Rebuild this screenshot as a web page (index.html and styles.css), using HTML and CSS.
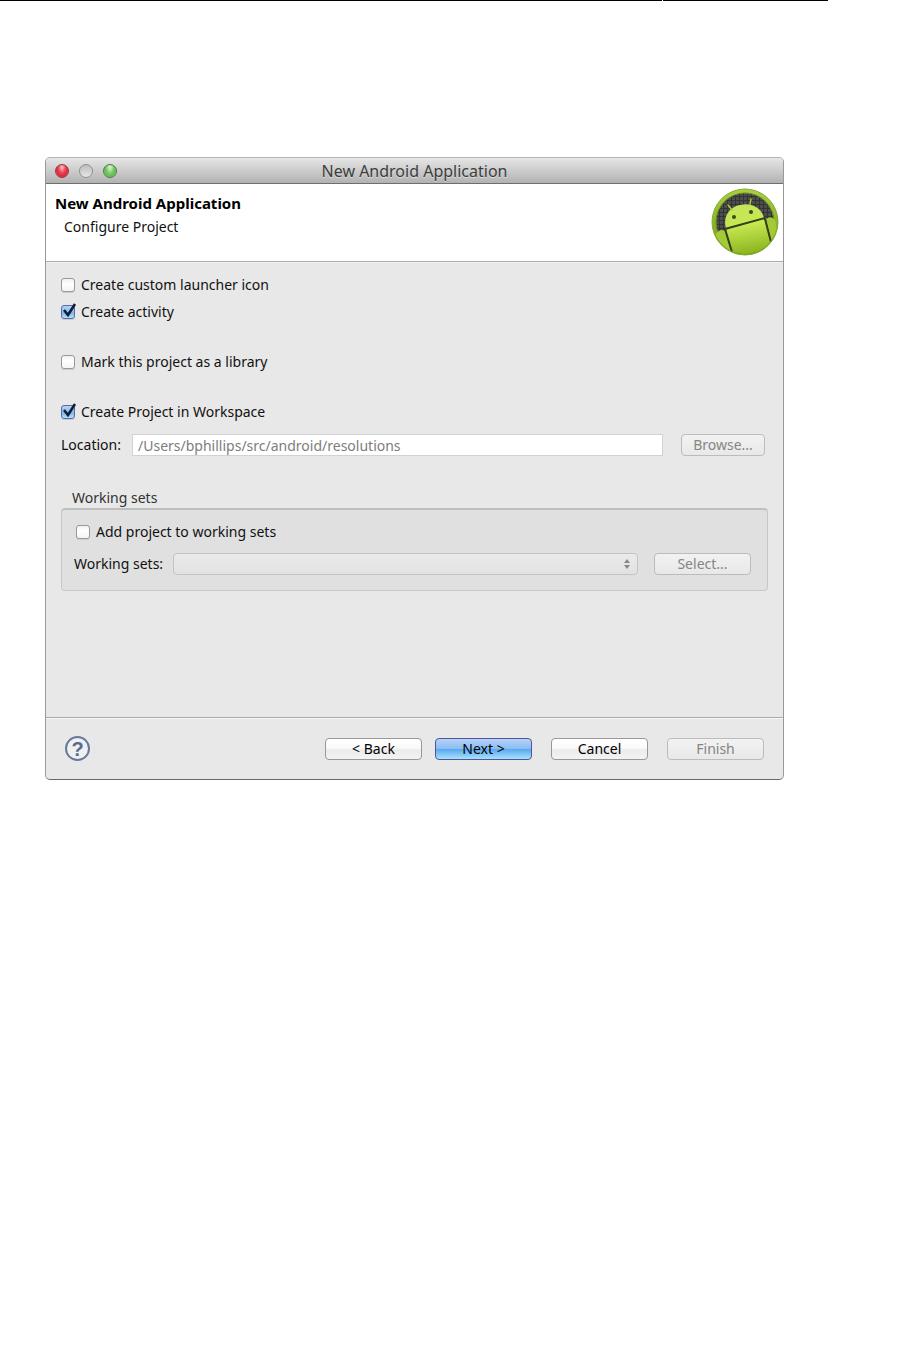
FILE: index.html
```html
<!DOCTYPE html>
<html lang="en">
<head>
    <meta charset="UTF-8">
    <meta name="viewport" content="width=device-width, initial-scale=1.0">
    <title>New Android Application</title>
    <link rel="stylesheet" href="styles.css">
</head>
<body>
    <!-- Page rule -->
    <div class="page-rule">
        <span class="rule-long"></span>
        <span class="rule-short"></span>
    </div>

    <!-- Dialog window -->
    <form class="window">
        <div class="titlebar">
            <div class="lights">
                <span class="light red"></span>
                <span class="light gray"></span>
                <span class="light green"></span>
            </div>
            <div class="window-title">New Android Application</div>
        </div>

        <div class="banner">
            <div class="banner-text">
                <h1>New Android Application</h1>
                <p>Configure Project</p>
            </div>
            <svg class="logo" width="68" height="68" viewBox="0 0 68 68" aria-hidden="true">
                <defs>
                    <linearGradient id="ring" x1="0" y1="0" x2="0" y2="1">
                        <stop offset="0" stop-color="#a9cf45"/>
                        <stop offset="1" stop-color="#6f9a12"/>
                    </linearGradient>
                    <linearGradient id="droid" gradientUnits="userSpaceOnUse" x1="30" y1="16" x2="38" y2="68">
                        <stop offset="0" stop-color="#c4e65a"/>
                        <stop offset="0.4" stop-color="#c6e852"/>
                        <stop offset="1" stop-color="#86b01a"/>
                    </linearGradient>
                    <pattern id="mesh" width="4" height="4" patternUnits="userSpaceOnUse">
                        <rect width="4" height="4" fill="#4c4d4d"/>
                        <path d="M0 0H4M0 0V4" stroke="#333" stroke-width="2"/>
                    </pattern>
                    <clipPath id="disc"><circle cx="34" cy="34" r="32"/></clipPath>
                </defs>
                <circle cx="34" cy="34" r="33" fill="url(#ring)" stroke="#86ab2c" stroke-width="1"/>
                <circle cx="34" cy="34" r="29" fill="url(#mesh)" stroke="#688f1a" stroke-width="1"/>
                <g clip-path="url(#disc)">
                    <path d="M15 41L53 30L63 60L40 70H22z" fill="url(#droid)"/>
                    <path d="M5 46Q9 40 14 43L21 66L4 58z" fill="#a4ca36"/>
                    <path d="M55 31Q60 27 64 32L68 50L60 54z" fill="#a4ca36"/>
                    <path d="M15 40C12 29 18 19 29 17C40 14 51 20 53 30z" fill="url(#droid)"/>
                    <path d="M14 41L54 30M14 41L21 64M54 31L60 54" fill="none" stroke="#34401a" stroke-width="2"/>
                    <path d="M17 17L21 22M40 11L39 17" stroke="#a6cc3c" stroke-width="1.5" stroke-linecap="round"/>
                </g>
                <circle cx="23" cy="29" r="2" fill="#3e4b18"/>
                <circle cx="40" cy="24" r="2" fill="#3e4b18"/>
            </svg>
        </div>

        <div class="content">
            <label class="check">
                <input type="checkbox">
                Create custom launcher icon
            </label>
            <label class="check">
                <input type="checkbox" checked>
                <svg class="tick" width="16" height="17" viewBox="0 0 16 17" aria-hidden="true"><path d="M3 8L7 13L14 2" /></svg>
                Create activity
            </label>
            <label class="check spaced">
                <input type="checkbox">
                Mark this project as a library
            </label>
            <label class="check spaced">
                <input type="checkbox" checked>
                <svg class="tick" width="16" height="17" viewBox="0 0 16 17" aria-hidden="true"><path d="M3 8L7 13L14 2" /></svg>
                Create Project in Workspace
            </label>

            <div class="location">
                <label for="location">Location:</label>
                <input type="text" id="location" value="/Users/bphillips/src/android/resolutions" disabled>
                <button class="button browse" type="button" disabled>Browse...</button>
            </div>

            <fieldset class="sets">
                <legend>Working sets</legend>
                <div class="sets-box">
                    <label class="check">
                        <input type="checkbox">
                        Add project to working sets
                    </label>
                    <div class="sets-row">
                        <label for="sets">Working sets:</label>
                        <div class="select">
                            <select id="sets" disabled></select>
                            <svg class="arrows" width="6" height="10" viewBox="0 0 6 10" aria-hidden="true"><path d="M3 0L6 4H0zM3 10L0 6H6z" /></svg>
                        </div>
                        <button class="button" type="button" disabled>Select...</button>
                    </div>
                </div>
            </fieldset>
        </div>

        <div class="footer">
            <button class="help" type="button" aria-label="Help">?</button>
            <div class="nav">
                <button class="button" type="button">&lt; Back</button>
                <button class="button primary" type="button">Next &gt;</button>
            </div>
            <button class="button" type="button">Cancel</button>
            <button class="button" type="button" disabled>Finish</button>
        </div>
    </form>
</body>
</html>
```
FILE: styles.css
```css
* {
    box-sizing: border-box;
    margin: 0;
    padding: 0;
}
body {
    background-color: #fff;
    color: #111;
    font-family: "Lucida Grande", "Noto Sans", sans-serif;
    font-size: 14px;
    line-height: 20px;
}
button,
input,
select {
    font: inherit;
}
.page-rule {
    display: flex;
    gap: 1px;
    height: 1px;
    margin-right: 89px;
}
.page-rule span {
    background-color: #000;
}
.rule-long {
    flex: 4;
}
.rule-short {
    flex: 1;
}
.window {
    margin: 156px 133px 40px 45px;
    background-color: #e8e8e8;
    border: 1px solid #999;
    border-top-color: #b4b4b4;
    border-bottom-color: #686868;
    border-radius: 5px;
    overflow: hidden;
}
.titlebar {
    display: grid;
    grid-template-columns: 1fr auto 1fr;
    align-items: center;
    height: 26px;
    padding: 0 9px;
    background: linear-gradient(#e6e6e6, #b2b2b2);
    border-bottom: 1px solid #6e6e6e;
}
.lights {
    display: flex;
    gap: 10px;
}
.light {
    width: 14px;
    height: 14px;
    border: 1px solid #888;
    border-radius: 50%;
}
.red {
    background: radial-gradient(ellipse at 50% 20%, #fbc6c8, #ea4a58 40%, #dc2638 65%, #ff9a94);
    border-color: #9a3440;
}
.gray {
    background: linear-gradient(#bdbdbd, #e6e6e6);
    border-color: #8f8f8f;
}
.green {
    background: radial-gradient(ellipse at 50% 20%, #e2f6dc, #86cd76 40%, #62bb50 65%, #c4f7a4);
    border-color: #44803a;
}
.window-title {
    color: #3c3c3c;
    font-size: 16px;
    text-shadow: 0 1px 0 #ddd;
}
.banner {
    display: flex;
    justify-content: space-between;
    height: 78px;
    padding: 4px 4px 0 9px;
    background-color: #fff;
    border-bottom: 1px solid #aaa;
}
.banner-text {
    padding-top: 4px;
}
.banner h1 {
    color: #000;
    font-size: 15px;
    font-weight: bold;
    line-height: 22px;
}
.banner p {
    padding: 3px 0 0 9px;
}
.content {
    min-height: 455px;
    padding: 12px 15px 0;
    border-top: 1px solid #f2f2f2;
}
.check {
    display: flex;
    align-items: center;
    gap: 6px;
    position: relative;
    width: fit-content;
    margin-bottom: 7px;
}
.check.spaced {
    margin: 30px 0 0;
}
.check input {
    appearance: none;
    width: 14px;
    height: 14px;
    background: linear-gradient(#f0f0f0, #fff 40%, #f4f4f4);
    border: 1px solid #989898;
    border-radius: 3px;
    box-shadow: 0 1px 0 #ccc;
}
.check input:checked {
    background: linear-gradient(#b9d2f5, #7cb9f2 60%, #aee4fb);
    border-color: #6067a5;
}
.tick {
    position: absolute;
    left: 0;
    top: 0;
    fill: none;
    stroke: #101c33;
    stroke-width: 2.5;
}
.location {
    display: flex;
    align-items: center;
    margin-top: 12px;
}
.location label {
    width: 71px;
}
.location input {
    flex: 1;
    min-width: 0;
    height: 22px;
    margin-right: 18px;
    padding: 0 5px;
    background-color: #fff;
    border: 1px solid #d2d2d2;
    color: #7d7d7d;
}
.button {
    width: 97px;
    height: 22px;
    background: linear-gradient(#fff, #fafafa 45%, #ececec 55%, #f3f3f3);
    border: 1px solid #989898;
    border-radius: 4px;
    color: #000;
    line-height: 18px;
}
.button:disabled {
    background: linear-gradient(#f2f2f2, #e8e8e8);
    border-color: #bcbcbc;
    color: #858585;
}
.button.primary {
    background: linear-gradient(#b7d2f6, #8abdf4 48%, #5ba8f0 52%, #a8e3fb);
    border-color: #5353a0;
}
.button.browse {
    width: 84px;
    margin-right: 3px;
}
.sets {
    margin-top: 32px;
    border: none;
}
.sets legend {
    padding-left: 11px;
    color: #333;
}
.sets-box {
    padding: 12px 16px 15px 12px;
    background-color: #e0e0e0;
    border: 1px solid #c8c8c8;
    border-top: 2px solid #bfbfbf;
    border-radius: 4px;
}
.sets-box .check {
    margin: 0 0 11px 2px;
}
.sets-row {
    display: flex;
    align-items: center;
}
.sets-row label {
    width: 99px;
}
.select {
    position: relative;
    display: flex;
    flex: 1;
    margin-right: 16px;
}
.select select {
    appearance: none;
    width: 100%;
    height: 22px;
    background: linear-gradient(#f0f0f0, #e3e3e3);
    border: 1px solid #b8b8b8;
    border-radius: 4px;
}
.arrows {
    position: absolute;
    right: 8px;
    top: 6px;
    fill: #888;
}
.footer {
    display: flex;
    align-items: center;
    gap: 19px;
    height: 62px;
    padding: 0 19px;
    border-top: 1px solid #aaa;
    box-shadow: inset 0 1px 0 #f8f8f8;
}
.help {
    width: 25px;
    height: 25px;
    margin-right: auto;
    background-color: #f0f0f0;
    border: 2px solid #66799c;
    border-radius: 50%;
    color: #586c92;
    font: bold 20px/20px "Liberation Sans", sans-serif;
}
.nav {
    display: flex;
    gap: 13px;
}
```
